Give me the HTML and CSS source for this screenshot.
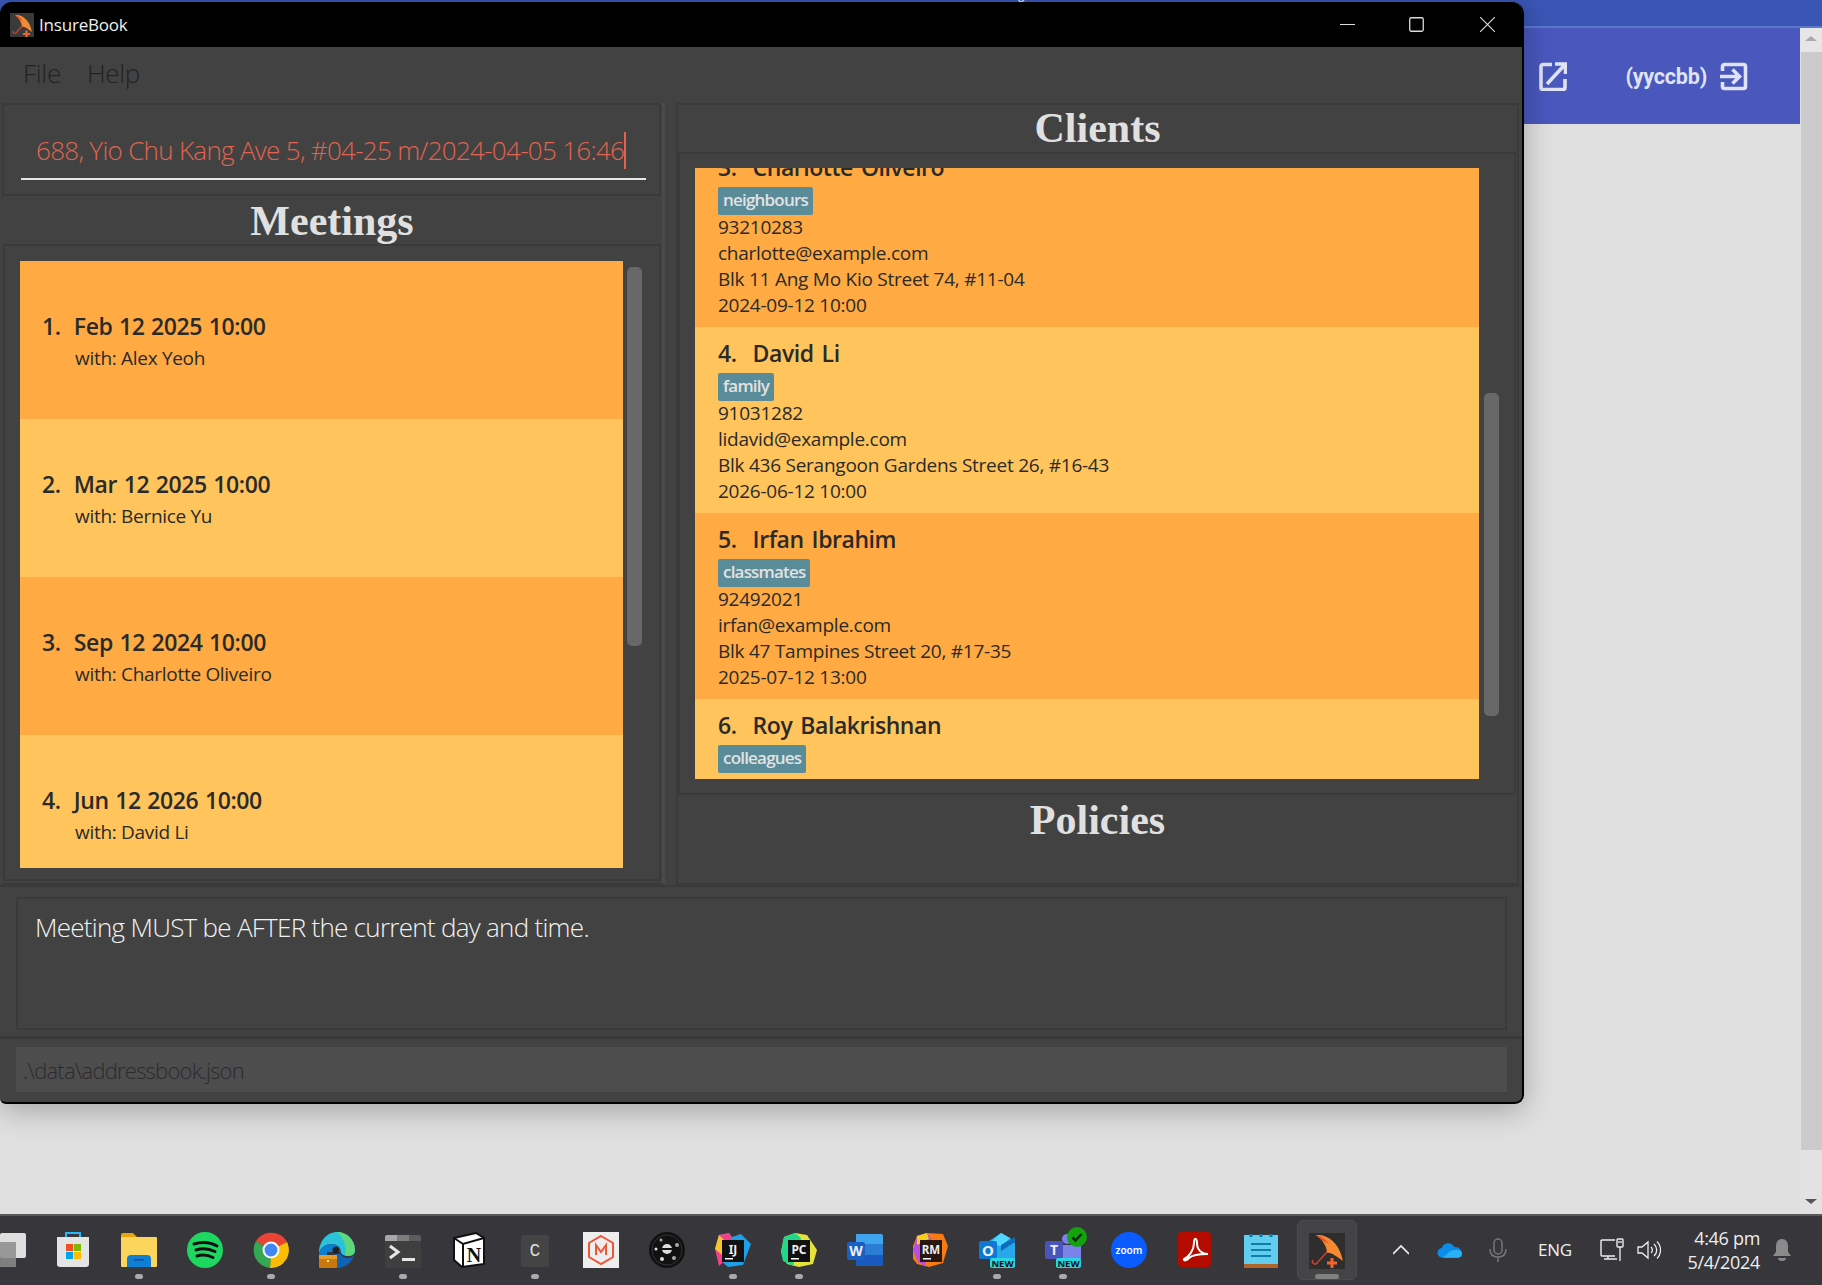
FILE: index.html
```html
<!DOCTYPE html>
<html>
<head>
    <title>InsureBook</title>
    <link rel="stylesheet" href="styles.css">
</head>
<body>
    <div class="desktop">
        <!-- browser behind the app window -->
        <div class="browser">
            <div class="browser-main">
                <div class="bookmarks">
                    <span class="bookmark b1">AY2324S2 CS2103 Hill</span>
                    <span class="bookmark b2">Mixtafio</span>
                    <span class="bookmark b3">Blockchain</span>
                    <span class="bookmark b4">JS to read db</span>
                    <span class="bookmark b5">World of Seven - Bull</span>
                    <span class="bookmark b6">Read/learning</span>
                    <span class="bookmark b7">Enrichment</span>
                    <span class="bookmark b8">JavaBet</span>
                </div>
                <div class="site-nav">
                    <svg class="nav-icon nav-open" viewBox="0 0 28 29"><path d="M13 2.500H4a2 2 0 0 0-2 2v21a2 2 0 0 0 2 2h20a2 2 0 0 0 2-2V17" fill="none" stroke="#dfe3f5" stroke-width="3.600"/><path d="M16 2H26.500V12" fill="none" stroke="#dfe3f5" stroke-width="3.600"/><path d="M25.500 3 8 22" fill="none" stroke="#dfe3f5" stroke-width="3.600"/></svg>
                    <span class="nav-user">(yyccbb)</span>
                    <svg class="nav-icon" viewBox="0 0 28 29"><path d="M2.500 9V4.500a2 2 0 0 1 2-2h19a2 2 0 0 1 2 2v20a2 2 0 0 1-2 2h-19a2 2 0 0 1-2-2V20" fill="none" stroke="#dfe3f5" stroke-width="3.600"/><path d="M0 14.500H19M12.500 7.500l7 7-7 7" fill="none" stroke="#dfe3f5" stroke-width="3.600"/></svg>
                </div>
            </div>
            <div class="page-scroll">
                <div class="scroll-btn scroll-up"><span class="tri-up"></span></div>
                <div class="scroll-thumb"></div>
                <div class="scroll-btn scroll-down"><span class="tri-down"></span></div>
            </div>
        </div>

        <!-- InsureBook window -->
        <div class="window">
            <div class="titlebar">
                <svg class="app-icon" viewBox="0 0 24 24"><rect width="24" height="24" fill="#3a3a3a"/><path d="M5 2C12 1 20 7 22 19 18 16 14 13 12 14 12 10 9 5 5 2Z" fill="#f58a33"/><path d="M5 2C9 3 11 5 13 9L9 6Z" fill="#e8502c"/><path d="M12 13 6 20a2 2 0 0 1-3-2" fill="none" stroke="#c8442c" stroke-width="1.200"/><path d="M13 21h7M16.500 17.500v7" stroke="#f0642c" stroke-width="2.200"/></svg>
                <span class="app-name">InsureBook</span>
                <div class="win-controls">
                    <div class="win-btn"><svg width="15" height="15" viewBox="0 0 15 15"><path d="M0 7.500H15" stroke="#ddd"/></svg></div>
                    <div class="win-btn"><svg width="15" height="15" viewBox="0 0 15 15"><rect x=".75" y=".75" width="13.500" height="13.500" rx="1.500" fill="none" stroke="#ddd" stroke-width="1.300"/></svg></div>
                    <div class="win-btn"><svg width="15" height="15" viewBox="0 0 15 15"><path d="M0 0 15 15M15 0 0 15" stroke="#ddd" stroke-width="1.100"/></svg></div>
                </div>
            </div>

            <div class="menubar">
                <span class="menu-item">File</span>
                <span class="menu-item">Help</span>
            </div>

            <div class="main">
                <div class="left-col">
                    <div class="command-box">
                        <div class="command-input">
                            <span class="command-text">688, Yio Chu Kang Ave 5, #04-25 m/2024-04-05 16:46</span>
                        </div>
                    </div>
                    <div class="pane-title meetings-title">Meetings</div>
                    <div class="list-panel meetings-panel">
                        <div class="meeting-list">
                            <div class="meeting odd">
                                <div class="meeting-date">1.  Feb 12 2025 10:00</div>
                                <div class="meeting-with">with: Alex Yeoh</div>
                            </div>
                            <div class="meeting even">
                                <div class="meeting-date">2.  Mar 12 2025 10:00</div>
                                <div class="meeting-with">with: Bernice Yu</div>
                            </div>
                            <div class="meeting odd">
                                <div class="meeting-date">3.  Sep 12 2024 10:00</div>
                                <div class="meeting-with">with: Charlotte Oliveiro</div>
                            </div>
                            <div class="meeting even">
                                <div class="meeting-date">4.  Jun 12 2026 10:00</div>
                                <div class="meeting-with">with: David Li</div>
                            </div>
                        </div>
                        <div class="list-scroll meetings-scroll"><div class="thumb"></div></div>
                    </div>
                </div>

                <div class="right-col">
                    <div class="pane-title clients-title">Clients</div>
                    <div class="list-panel clients-panel">
                        <div class="client-list">
                            <div class="client-scroll">
                                <div class="client odd">
                                    <div class="client-name">3.  Charlotte Oliveiro</div>
                                    <span class="tag">neighbours</span>
                                    <div class="client-line">93210283</div>
                                    <div class="client-line">charlotte@example.com</div>
                                    <div class="client-line">Blk 11 Ang Mo Kio Street 74, #11-04</div>
                                    <div class="client-line">2024-09-12 10:00</div>
                                </div>
                                <div class="client even">
                                    <div class="client-name">4.  David Li</div>
                                    <span class="tag">family</span>
                                    <div class="client-line">91031282</div>
                                    <div class="client-line">lidavid@example.com</div>
                                    <div class="client-line">Blk 436 Serangoon Gardens Street 26, #16-43</div>
                                    <div class="client-line">2026-06-12 10:00</div>
                                </div>
                                <div class="client odd">
                                    <div class="client-name">5.  Irfan Ibrahim</div>
                                    <span class="tag">classmates</span>
                                    <div class="client-line">92492021</div>
                                    <div class="client-line">irfan@example.com</div>
                                    <div class="client-line">Blk 47 Tampines Street 20, #17-35</div>
                                    <div class="client-line">2025-07-12 13:00</div>
                                </div>
                                <div class="client even">
                                    <div class="client-name">6.  Roy Balakrishnan</div>
                                    <span class="tag">colleagues</span>
                                </div>
                            </div>
                        </div>
                        <div class="list-scroll clients-scroll"><div class="thumb"></div></div>
                    </div>
                    <div class="pane-title policies-title">Policies</div>
                </div>
            </div>

            <div class="result-area">
                <div class="result-box">Meeting MUST be AFTER the current day and time.</div>
            </div>
            <div class="status-area">
                <div class="status-box">.\data\addressbook.json</div>
            </div>
        </div>

        <!-- windows taskbar -->
        <div class="taskbar">
            <div class="task-apps">
                <div class="task first">
                    <svg class="ticon" viewBox="0 0 26 36"><rect y="1" width="26" height="25" rx="2" fill="#dedede"/><rect y="10" width="16" height="25" fill="#8c8c8c" opacity=".85"/></svg>
                </div>
                <div class="task">
                    <svg class="ticon" viewBox="0 0 36 36"><path d="M11 6V1h14v5" fill="none" stroke="#29b6f6" stroke-width="2"/><path d="M2 5h32v27a3 3 0 0 1-3 3H5a3 3 0 0 1-3-3Z" fill="#e4e4e4"/><rect x="11" y="12" width="7" height="7" fill="#f25022"/><rect x="19" y="12" width="7" height="7" fill="#7fba00"/><rect x="11" y="20" width="7" height="7" fill="#00a4ef"/><rect x="19" y="20" width="7" height="7" fill="#ffb900"/></svg>
                </div>
                <div class="task on">
                    <svg class="ticon" viewBox="0 0 36 36"><path d="M0 3a2 2 0 0 1 2-2h10l4 4h0v29H0Z" fill="#eaa20e"/><rect y="5" width="36" height="30" rx="1" fill="#fcd65c"/><path d="M6 27a4 4 0 0 1 4-4h16a4 4 0 0 1 4 4v8H6Z" fill="#0f7fd6"/><rect x="13" y="27" width="10" height="1.500" fill="#074a85"/></svg>
                </div>
                <div class="task">
                    <svg class="ticon" viewBox="0 0 36 36"><circle cx="18" cy="18" r="18" fill="#1ed760"/><path d="M7 12c8-2.500 16-2 23 2M9 18c6-2 13-1.500 19 1.500M10 24c5-1.500 11-1 16 1.500" fill="none" stroke="#111" stroke-width="3" stroke-linecap="round"/></svg>
                </div>
                <div class="task on">
                    <svg class="ticon" viewBox="0 0 36 36"><path d="M18 18 3 9A18 18 0 0 1 34 10Z" fill="#ea4335"/><path d="M18 18 34 10A18 18 0 0 1 17 36Z" fill="#fbbc05"/><path d="M18 18 17 36A18 18 0 0 1 3 9Z" fill="#34a853"/><circle cx="18" cy="18" r="8.500" fill="#fff"/><circle cx="18" cy="18" r="6.500" fill="#4285f4"/></svg>
                </div>
                <div class="task">
                    <svg class="ticon" viewBox="0 0 36 36"><path d="M18 0C28 0 36 8 36 18c0 3-2 6-7 6-4 0-7-2-7-4 0-4-4-8-9-8C7 12 2 15 0 21 0 9 8 0 18 0Z" fill="#2bc3d9"/><path d="M36 18c0 10-8 18-18 18-4 0-8-2-10-5l8-9h6c0 2 3 4 7 4 5 0 7-3 7-8Z" fill="#0f63b5"/><path d="M18 0c10 0 18 8 18 18 0 3-2 6-7 6-1 0-2 0-3-1 3-8-2-18-8-23Z" fill="#5ed87a"/><path d="M0 21c2-6 7-9 13-9 5 0 9 3 9 8H8v12C3 29 0 26 0 21Z" fill="#0b7ed0"/><circle cx="17" cy="18" r="3.500" fill="#222"/><rect y="23" width="18" height="13" rx="1" fill="#c9780e"/><rect y="23" width="18" height="4" fill="#e99a26"/><rect x="8" y="28" width="2" height="2" fill="#ffe9a8"/></svg>
                </div>
                <div class="task on">
                    <svg class="ticon" viewBox="0 0 36 36"><rect y="3" width="36" height="33" rx="2" fill="#3f3f3f"/><path d="M0 5a2 2 0 0 1 2-2h10v6H0Z" fill="#a8a8a8"/><rect x="12" y="3" width="12" height="6" fill="#7d7d7d"/><path d="M24 3h10a2 2 0 0 1 2 2v4H24Z" fill="#5c5c5c"/><path d="M5 14l8 6-8 6" fill="none" stroke="#e6e6e6" stroke-width="3"/><rect x="17" y="26" width="13" height="3" fill="#e6e6e6"/></svg>
                </div>
                <div class="task">
                    <svg class="ticon" viewBox="0 0 36 36"><path d="M3 6 25 1l8 5v26L11 35l-8-7Z" fill="#fff" stroke="#111" stroke-width="2"/><path d="M3 6l9 6 21-6M12 12v23" fill="none" stroke="#111" stroke-width="2"/><text class="svg-serif" x="23" y="30" font-size="20" text-anchor="middle">N</text></svg>
                </div>
                <div class="task on">
                    <svg class="ticon" viewBox="0 0 36 36"><rect x="4" y="3" width="28" height="32" rx="2" fill="#444"/><text class="svg-mono" x="18" y="24" font-size="18" text-anchor="middle">C</text></svg>
                </div>
                <div class="task">
                    <svg class="ticon" viewBox="0 0 36 36"><rect width="36" height="36" fill="#eee"/><path d="M18 4 30 11v14L18 32 6 25V11Z" fill="none" stroke="#ef5533" stroke-width="2"/><path d="M13 23V13l5 7 5-7v10" fill="none" stroke="#ef5533" stroke-width="2"/></svg>
                </div>
                <div class="task">
                    <svg class="ticon" viewBox="0 0 36 36"><circle cx="18" cy="18" r="18" fill="#111"/><circle cx="18" cy="18" r="15" fill="none" stroke="#333"/><circle cx="18" cy="17" r="5" fill="#ddd"/><rect x="13" y="16" width="10" height="2" fill="#111"/><circle cx="7" cy="17" r="1.500" fill="#ddd"/><circle cx="28" cy="13" r="2" fill="#aaa"/><circle cx="12" cy="8" r="1.500" fill="#aaa"/><circle cx="13" cy="27" r="2" fill="#ddd"/><circle cx="25" cy="26" r="2" fill="#aaa"/></svg>
                </div>
                <div class="task on">
                    <svg class="ticon" viewBox="0 0 36 36"><path d="M4 3 14 1l3 4 9-3 10 10-8 21-15 2-7-6L0 17Z" fill="#1e9fe6"/><path d="M4 3 14 1l3 4-3 20-10 9L0 17Z" fill="#f0418a"/><path d="M0 17 4 3l6 6-3 14Z" fill="#f7c52b"/><rect x="7" y="8" width="22" height="22" fill="#111"/><text class="svg-ide" x="18" y="22" font-size="12" text-anchor="middle">IJ</text><rect x="10" y="26" width="8" height="1.500" fill="#fff"/></svg>
                </div>
                <div class="task on">
                    <svg class="ticon" viewBox="0 0 36 36"><path d="M3 5 14 1l12 2 10 15-4 14-14 3-12-3L0 20Z" fill="#e5e23b"/><path d="M3 5 14 1l6 5-8 28-10-5L0 20Z" fill="#21d789"/><rect x="7" y="8" width="22" height="22" fill="#111"/><text class="svg-ide" x="18" y="22" font-size="12" text-anchor="middle">PC</text><rect x="10" y="26" width="8" height="1.500" fill="#fff"/></svg>
                </div>
                <div class="task">
                    <svg class="ticon" viewBox="0 0 36 36"><path d="M9 2h25a2 2 0 0 1 2 2v8H9Z" fill="#41a5ee"/><rect x="9" y="12" width="27" height="11" fill="#2b7cd3"/><rect x="9" y="23" width="27" height="11" fill="#185abd"/><rect y="10" width="18" height="18" rx="2" fill="#1a5fc4"/><text class="svg-ide" x="9" y="24" font-size="14" text-anchor="middle">W</text></svg>
                </div>
                <div class="task">
                    <svg class="ticon" viewBox="0 0 36 36"><path d="M4 4 14 1l16 1 5 12-5 17-14 4-12-3-7-9 3-9Z" fill="#f97a12"/><path d="M4 4 14 1l4 5-6 28-7-4-5-12 3-9Z" fill="#b84fe0"/><path d="M4 4 14 1l2 6-12 6Z" fill="#f5d020"/><rect x="7" y="8" width="22" height="22" fill="#2a1712"/><text class="svg-ide" x="18" y="22" font-size="11.500" text-anchor="middle">RM</text><rect x="10" y="26" width="8" height="1.500" fill="#fff"/></svg>
                </div>
                <div class="task on">
                    <svg class="ticon" viewBox="0 0 36 36"><path d="M10 9 22 1l9 5 5 5v20H13Z" fill="#28a8ea"/><path d="M22 1l9 5-9 8-12-2Z" fill="#50d9ff"/><path d="M22 13l14-8v5l-14 9Z" fill="#0f6cbd"/><rect y="9" width="18" height="18" rx="2" fill="#0f78d4"/><text class="svg-ide" x="9" y="23.500" font-size="15" text-anchor="middle">O</text><rect x="11" y="26" width="25" height="10" rx="2" fill="#27d6e0"/><text class="svg-new" x="23.500" y="34.500" font-size="9.500" text-anchor="middle">NEW</text></svg>
                </div>
                <div class="task on">
                    <svg class="ticon ticon-teams" viewBox="0 0 36 36"><circle cx="22" cy="7" r="5" fill="#7b83eb"/><path d="M14 13h22v14H14Z" fill="#7b83eb"/><rect y="9" width="18" height="18" rx="2" fill="#4b53bc"/><text class="svg-ide" x="9" y="23" font-size="14" text-anchor="middle">T</text><rect x="11" y="26" width="25" height="10" rx="2" fill="#27d6e0"/><text class="svg-new" x="23.500" y="34.500" font-size="9.500" text-anchor="middle">NEW</text></svg>
                    <svg class="teams-check" viewBox="0 0 20 20"><circle cx="10" cy="10" r="10" fill="#13a10e"/><path d="M5.500 10.500l3 3 6-6.500" fill="none" stroke="#0b2c0a" stroke-width="2.500"/></svg>
                </div>
                <div class="task">
                    <svg class="ticon" viewBox="0 0 36 36"><circle cx="18" cy="18" r="18" fill="#0b5cff"/><text class="svg-zoom" x="18" y="21.500" font-size="10" text-anchor="middle">zoom</text></svg>
                </div>
                <div class="task">
                    <svg class="ticon" viewBox="0 0 36 36"><rect x="1" width="33" height="35" rx="4" fill="#b30b00"/><path d="M7 27c5-2 10-9 10-16 0-6 3-5 3 0 0 7 5 11 11 11-6 0-16 1-19 4-2 3-6 3-5 1Z" fill="none" stroke="#fff" stroke-width="2"/></svg>
                </div>
                <div class="task">
                    <svg class="ticon" viewBox="0 0 36 36"><rect x="1" y="3" width="34" height="33" fill="#b0642a"/><rect x="1" y="3" width="34" height="29" fill="#62cdee"/><path d="M8 2v3M18 2v3M28 2v3" stroke="#0b7aa6" stroke-width="3"/><path d="M8 12h20M8 18h20M8 24h20" stroke="#0e7fa8" stroke-width="2"/></svg>
                </div>
                <div class="task current">
                    <svg class="ticon" viewBox="0 0 36 36"><rect width="36" height="36" fill="#2e2e2e"/><path d="M7 2C17 1 30 8 34 28 28 24 22 19 18 20 18 14 14 7 7 2Z" fill="#f58a33"/><path d="M7 2C12 3 16 6 20 11L14 8Z" fill="#e8502c"/><path d="M18 19 8 30a2.500 2.500 0 0 1-4-3" fill="none" stroke="#c8442c" stroke-width="1.500"/><path d="M18 30h10M23 25v10" stroke="#f0642c" stroke-width="3"/></svg>
                </div>
            </div>

            <div class="tray">
                <svg class="tray-icon tray-chevron" viewBox="0 0 16 16"><path d="M0 12 8 4l8 8" fill="none" stroke="#eee" stroke-width="1.700"/></svg>
                <svg class="tray-icon tray-cloud" viewBox="0 0 26 16"><path d="M6 16a5 5 0 0 1-1-10 7 7 0 0 1 13-1 5.500 5.500 0 0 1 3 11Z" fill="#0c8ce9"/><path d="M6 16h16a4 4 0 0 0 0-8c-3 0-6 0-8 1Z" fill="#29b0f5"/></svg>
                <svg class="tray-icon tray-mic" viewBox="0 0 18 24"><rect x="5" y="1" width="8" height="15" rx="4" fill="none" stroke="#777" stroke-width="1.500"/><path d="M1 11c0 6 4 8 8 8s8-2 8-8M9 19v5" fill="none" stroke="#777" stroke-width="1.500"/></svg>
                <span class="tray-lang">ENG</span>
                <svg class="tray-icon tray-net" viewBox="0 0 24 24"><path d="M15 2H2a1 1 0 0 0-1 1v14a1 1 0 0 0 1 1h13M8 18v3M4 21h13" fill="none" stroke="#eee" stroke-width="1.400"/><rect x="17" y="1" width="6" height="8" rx="1" fill="none" stroke="#eee" stroke-width="1.400"/><path d="M19 3v2M21 3v2M20 9v14" stroke="#eee" stroke-width="1.300"/></svg>
                <svg class="tray-icon tray-sound" viewBox="0 0 24 20"><path d="M1 7h4l6-5v16l-6-5H1Z" fill="none" stroke="#eee" stroke-width="1.300"/><path d="M14 7a4 4 0 0 1 0 6M17 4a8 8 0 0 1 0 12M20 1.500a12 12 0 0 1 0 17" fill="none" stroke="#eee" stroke-width="1.300"/></svg>
                <div class="clock">
                    <div>4:46 pm</div>
                    <div>5/4/2024</div>
                </div>
                <svg class="tray-icon tray-bell" viewBox="0 0 20 24"><path d="M10 1c4 0 6 3 6 7v6l3 4H1l3-4V8c0-4 2-7 6-7Z" fill="#8a8a8a"/><path d="M6 20h8a4 3 0 0 1-8 0Z" fill="#8a8a8a"/></svg>
            </div>
        </div>
    </div>
</body>
</html>
```

FILE: styles.css
```css
* {
    box-sizing: border-box;
}

html, body {
    margin: 0;
    padding: 0;
}

body {
    font-family: "Open Sans", "Noto Sans", sans-serif;
    background-color: #e0e0e0;
    overflow: hidden;
}

.desktop {
    position: relative;
    width: 1822px;
    height: 1285px;
    display: flex;
    flex-direction: column;
    overflow: hidden;
}

/* browser behind */
.browser {
    height: 1214px;
    display: flex;
    flex-shrink: 0;
}

.browser-main {
    flex: 1;
}

.bookmarks {
    height: 28px;
    background-color: #3a55b5;
    border-bottom: 2px solid #5b78cb;
    display: flex;
    overflow: hidden;
    font-family: "Roboto", sans-serif;
    font-size: 15px;
    color: #e6e9f6;
    white-space: nowrap;
}

.bookmark {
    margin-top: -16px;
    line-height: 20px;
    height: 20px;
}

.b1 { margin-left: 38px; width: 226px; }
.b2 { width: 126px; }
.b3 { width: 150px; }
.b4 { width: 165px; }
.b5 { width: 227px; }
.b6 { width: 174px; }
.b7 { width: 153px; }
.b8 { width: 120px; }

.site-nav {
    height: 96px;
    background-color: #4a57bd;
    display: flex;
    justify-content: flex-end;
    align-items: center;
    padding-right: 52px;
    padding-top: 1px;
}

.nav-icon {
    width: 28px;
    height: 29px;
}

.nav-open {
    margin-right: 58px;
}

.nav-user {
    font-family: "Roboto", sans-serif;
    font-weight: 700;
    font-size: 21.500px;
    letter-spacing: -0.2px;
    color: #dfe3f5;
    margin-right: 13px;
}

.page-scroll {
    width: 22px;
    display: flex;
    flex-direction: column;
    background-color: #e2e2e2;
}

.scroll-btn {
    display: flex;
    justify-content: center;
    flex-shrink: 0;
}

.scroll-up {
    height: 52px;
    padding-top: 36px;
    background: linear-gradient(#3a55b5 26px, #5b78cb 26px, #5b78cb 28px, #e6e6e6 28px);
}

.scroll-thumb {
    height: 1098px;
    margin-left: 1px;
    background-color: #cbcbcb;
}

.scroll-down {
    flex: 1;
    align-items: flex-end;
    padding-bottom: 10px;
}

.tri-up {
    width: 0;
    height: 0;
    border-left: 6px solid transparent;
    border-right: 6px solid transparent;
    border-bottom: 5px solid #a9a9a9;
}

.tri-down {
    width: 0;
    height: 0;
    border-left: 6px solid transparent;
    border-right: 6px solid transparent;
    border-top: 5px solid #555;
}

/* app window */
.window {
    position: absolute;
    left: 0;
    top: 2px;
    width: 1524px;
    height: 1102px;
    background-color: #424242;
    border-right: 2px solid #000;
    border-bottom: 2px solid #000;
    border-radius: 12px 12px 9px 6px;
    box-shadow: 0 6px 30px rgba(0, 0, 0, 0.28);
    display: flex;
    flex-direction: column;
    overflow: hidden;
}

.titlebar {
    height: 45px;
    flex-shrink: 0;
    background-color: #000;
    display: flex;
    align-items: center;
    padding-left: 10px;
}

.app-icon {
    width: 24px;
    height: 24px;
}

.app-name {
    margin-left: 5px;
    margin-bottom: 1px;
    font-size: 17px;
    letter-spacing: -0.2px;
    color: #eee;
}

.win-controls {
    margin-left: auto;
    display: flex;
}

.win-btn {
    width: 69px;
    height: 45px;
    display: flex;
    align-items: center;
    justify-content: center;
}

.win-btn:last-child {
    margin-left: 2px;
}

.menubar {
    height: 56px;
    flex-shrink: 0;
    display: flex;
    align-items: center;
    padding: 0 0 4px 23px;
    gap: 26px;
}

.menu-item {
    font-size: 26px;
    font-weight: 300;
    letter-spacing: -0.3px;
    color: #222;
}

.main {
    height: 782px;
    flex-shrink: 0;
    display: flex;
    padding-left: 2px;
}

.left-col {
    width: 663px;
    border-right: 3px solid #4a4a4a;
    display: flex;
    flex-direction: column;
    border-bottom: 2px solid #3a3a3a;
}

.command-box {
    height: 93px;
    flex-shrink: 0;
    margin-right: 1px;
    border: 2px solid #3a3a3a;
    padding: 0 13px 0 17px;
}

.command-input {
    height: 75px;
    border-bottom: 2px solid #e6e6e6;
    padding: 27px 0 0 15px;
    white-space: nowrap;
    overflow: hidden;
}

.command-text {
    font-size: 26px;
    line-height: 37px;
    font-weight: 300;
    letter-spacing: -0.7px;
    color: #e0644f;
    border-right: 2px solid #e0644f;
    display: inline-block;
}

.pane-title {
    font-family: "Liberation Serif", serif;
    font-weight: bold;
    font-size: 42px;
    line-height: 48px;
    color: #e0e0e0;
    text-align: center;
    flex-shrink: 0;
}

.meetings-title {
    height: 48px;
    line-height: 50px;
}

.list-panel {
    display: flex;
    flex-shrink: 0;
    border: 2px solid #3a3a3a;
}

.meetings-panel {
    height: 637px;
    margin: 0 1px;
    padding: 15px 0 0 15px;
}

.meeting-list {
    width: 603px;
    height: 607px;
    overflow: hidden;
}

.meeting {
    height: 158px;
    padding: 4px 0 0 22px;
    display: flex;
    flex-direction: column;
    justify-content: center;
    color: #2a2a2a;
}

.odd {
    background-color: #ffaa42;
}

.even {
    background-color: #ffc45c;
}

.meeting-date {
    font-size: 23px;
    line-height: 32px;
    font-weight: 600;
    white-space: pre;
    letter-spacing: -0.4px;
    word-spacing: 1px;
}

.meeting-with {
    font-size: 19px;
    line-height: 32px;
    padding-left: 33px;
    letter-spacing: -0.3px;
}

.list-scroll {
    width: 15px;
    margin-left: 4px;
}

.thumb {
    background-color: #686868;
    border-radius: 5px;
}

.meetings-scroll .thumb {
    margin-top: 6px;
    height: 379px;
}

.right-col {
    width: 843px;
    margin-left: 11px;
    display: flex;
    flex-direction: column;
    border: 2px solid #3a3a3a;
}

.clients-title {
    height: 47px;
    line-height: 46px;
}

.clients-panel {
    height: 643px;
    margin-right: 1px;
    padding: 14px 0 0 15px;
}

.client-list {
    width: 784px;
    height: 611px;
    overflow: hidden;
}

.client-scroll {
    margin-top: -27px;
}

.client {
    height: 186px;
    padding: 7px 0 0 23px;
    color: #2a2a2a;
}

.client-name {
    font-size: 23px;
    line-height: 38px;
    margin-bottom: 1px;
    font-weight: 600;
    white-space: pre;
    letter-spacing: -0.45px;
    word-spacing: 2.500px;
}

.tag {
    display: inline-block;
    height: 28px;
    line-height: 26px;
    padding: 0 5px;
    margin-bottom: -1px;
    background-color: #5a8b98;
    border-radius: 2px;
    color: #e2e2e2;
    font-size: 17px;
    font-weight: 600;
    letter-spacing: -0.8px;
    vertical-align: top;
}

.client-line {
    font-size: 19px;
    line-height: 26px;
    letter-spacing: -0.25px;
}

.clients-scroll {
    margin-left: 5px;
}

.clients-scroll .thumb {
    margin-top: 225px;
    height: 323px;
}

.policies-title {
    padding-top: 1px;
}

.result-area {
    height: 154px;
    flex-shrink: 0;
    padding: 10px 15px 0 16px;
    border-top: 2px solid #3a3a3a;
    border-bottom: 3px solid #383838;
}

.result-box {
    height: 133px;
    border: 2px solid #3a3a3a;
    padding: 10px 17px;
    font-size: 26px;
    line-height: 37px;
    font-weight: 300;
    letter-spacing: -0.72px;
    color: #f2f2f2;
}

.status-area {
    flex: 1;
    padding: 8px 15px 10px 16px;
}

.status-box {
    height: 45px;
    background-color: #4d4d4d;
    padding-left: 7px;
    font-size: 22px;
    line-height: 47px;
    font-weight: 300;
    letter-spacing: -0.78px;
    color: #2b2b2b;
}

/* taskbar */
.taskbar {
    height: 71px;
    flex-shrink: 0;
    background-color: #37363a;
    border-top: 2px solid #59595b;
    display: flex;
    color: #eee;
}

.task-apps {
    display: flex;
}

.task {
    position: relative;
    width: 66px;
    height: 69px;
    display: flex;
    justify-content: center;
    padding-top: 16px;
}

.task.first {
    width: 40px;
    justify-content: flex-start;
}

.task.first .ticon {
    width: 26px;
}

.ticon {
    width: 36px;
    height: 36px;
}

/* running-app dot */
.task.on::after {
    content: "";
    position: absolute;
    left: 29px;
    top: 58px;
    width: 8px;
    height: 5px;
    border-radius: 3px;
    background-color: #aaa;
}

.task.current {
    width: 60px;
    height: 60px;
    margin: 4px 0 0 3px;
    padding-top: 12px;
    background-color: #444446;
    border: 1px solid #4c4c4e;
    border-radius: 6px;
}

.task.current::after {
    content: "";
    position: absolute;
    left: 17px;
    top: 53px;
    width: 24px;
    height: 5px;
    border-radius: 3px;
    background-color: #808080;
}

.teams-check {
    position: absolute;
    right: 9px;
    top: 11px;
    width: 20px;
    height: 20px;
}

.svg-serif {
    font-family: "Liberation Serif", serif;
    font-weight: bold;
    fill: #111;
}

.svg-mono {
    font-family: "Liberation Mono", monospace;
    fill: #ddd;
}

.svg-ide {
    font-family: "Noto Sans", sans-serif;
    font-weight: 700;
    fill: #eee;
}

.svg-new {
    font-family: "Noto Sans", sans-serif;
    font-weight: 700;
    fill: #111;
}

.svg-zoom {
    font-family: "Noto Sans", sans-serif;
    font-weight: 600;
    fill: #fff;
}

.tray {
    flex: 1;
    display: flex;
    align-items: center;
    padding-bottom: 2px;
}

.tray-icon {
    flex-shrink: 0;
}

.tray-chevron {
    width: 16px;
    height: 16px;
    margin-left: 36px;
}

.tray-cloud {
    width: 25px;
    height: 16px;
    margin-left: 28px;
}

.tray-mic {
    width: 18px;
    height: 24px;
    margin-left: 27px;
}

.tray-lang {
    font-size: 17px;
    margin-left: 31px;
    letter-spacing: -0.3px;
    width: 36px;
}

.tray-net {
    width: 24px;
    height: 24px;
    margin-left: 26px;
}

.tray-sound {
    width: 24px;
    height: 20px;
    margin-left: 13px;
}

.clock {
    width: 88px;
    margin-left: 11px;
    text-align: right;
    font-size: 18px;
    line-height: 24px;
    letter-spacing: -0.3px;
}

.tray-bell {
    width: 20px;
    height: 24px;
    margin-left: 12px;
}
```
